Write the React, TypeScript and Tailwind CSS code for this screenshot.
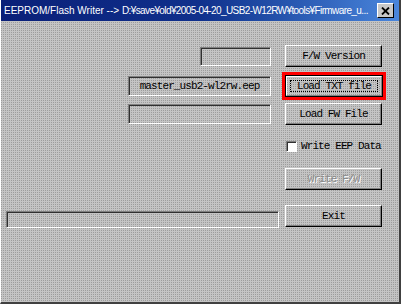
import type { ReactNode } from 'react';

const mono = "font-['Liberation_Mono','Courier_New',monospace] text-[11px] tracking-[-0.9px]";
const dither =
	'bg-[#c4c4c4] bg-[radial-gradient(circle_at_0.5px_0.5px,#9c9c9c_0.5px,transparent_0.7px)] bg-[length:2px_2px]';

function Button({ children, disabled }: { children: ReactNode; disabled?: boolean }) {
	return (
		<div
			className={`w-[97px] h-[22px] flex items-center justify-center border border-t-white border-l-white border-r-black border-b-black shadow-[inset_-1px_-1px_0_#808080] ${mono} ${
				disabled ? 'text-[#8a8a8a] [text-shadow:1px_1px_0_#ffffff]' : 'text-black'
			}`}
		>
			{children}
		</div>
	);
}

function FocusButton({ children }: { children: ReactNode }) {
	return (
		<div className="ml-[-3px] border-[3px] border-[#ff0000]">
			<div className="w-[98px] h-[22px] border border-black">
				<div
					className={`h-full p-[3px] border border-t-white border-l-white border-r-[#808080] border-b-[#808080] ${mono} text-black`}
				>
					<div className="h-full flex items-center justify-center border border-dotted border-black">
						{children}
					</div>
				</div>
			</div>
		</div>
	);
}

function Field({ width, height, children }: { width: string; height: string; children?: ReactNode }) {
	return (
		<div
			className={`${width} ${height} flex items-center justify-center border border-t-[#808080] border-l-[#808080] border-b-white border-r-white shadow-[inset_1px_1px_0_#303030] ${mono} text-black`}
		>
			{children}
		</div>
	);
}

export default function App() {
	return (
		<div className={`w-[401px] h-[304px] flex flex-col border-l border-l-white border-r-2 border-r-[#404040] border-b-2 border-b-[#404040] ${dither}`}>
			<div className="h-[21px] flex items-center pl-[3px] pr-[5px] bg-gradient-to-r from-[#0a1f78] via-[#10308c] to-[#4a86dc]">
				<span className="flex-1 min-w-0 font-['Liberation_Sans',Arial,sans-serif] text-[10px] text-white whitespace-nowrap">
					EEPROM/Flash Writer --&gt;{' '}
					<span className="tracking-[-0.6px]">D:¥save¥old¥2005-04-20_USB2-W12RW¥tools¥Firmware_u...</span>
				</span>
				<div className="w-[17px] h-[15px] shrink-0 ml-[6px] flex items-center justify-center bg-[#c8c8c8] border border-t-white border-l-white border-r-black border-b-black">
					<svg width="9" height="8" viewBox="0 0 9 8">
						<path d="M1 0.5 L8 7.5 M8 0.5 L1 7.5" stroke="#000" strokeWidth="1.8" />
					</svg>
				</div>
			</div>

			<div className="flex flex-col mt-[24px]">
				<div className="flex items-center h-[22px]">
					<div className="w-[284px] flex justify-end pr-[14px]">
						<Field width="w-[71px]" height="h-[19px]" />
					</div>
					<Button>F/W Version</Button>
				</div>

				<div className="flex items-center h-[28px] mt-[5px]">
					<div className="w-[284px] flex justify-end pr-[14px]">
						<Field width="w-[143px]" height="h-[20px]">master_usb2-wl2rw.eep</Field>
					</div>
					<FocusButton>Load TXT file</FocusButton>
				</div>

				<div className="flex items-center h-[22px] mt-[3px]">
					<div className="w-[284px] flex justify-end pr-[14px]">
						<Field width="w-[143px]" height="h-[20px]" />
					</div>
					<Button>Load FW File</Button>
				</div>

				<div className="flex items-center h-[12px] mt-[15px] pl-[285px] gap-[4px]">
					<div className="w-[11px] h-[11px] bg-white border border-t-[#808080] border-l-[#808080] border-b-white border-r-white shadow-[inset_1px_1px_0_#303030]" />
					<span className={`${mono} text-black`}>Write EEP Data</span>
				</div>

				<div className="flex items-center h-[22px] mt-[16px] pl-[284px]">
					<Button disabled>Write F/W</Button>
				</div>

				<div className="flex items-end h-[23px] mt-[15px]">
					<div className="w-[284px] pl-[5px]">
						<Field width="w-[273px]" height="h-[17px]" />
					</div>
					<div className="self-start">
						<Button>Exit</Button>
					</div>
				</div>
			</div>
		</div>
	);
}
